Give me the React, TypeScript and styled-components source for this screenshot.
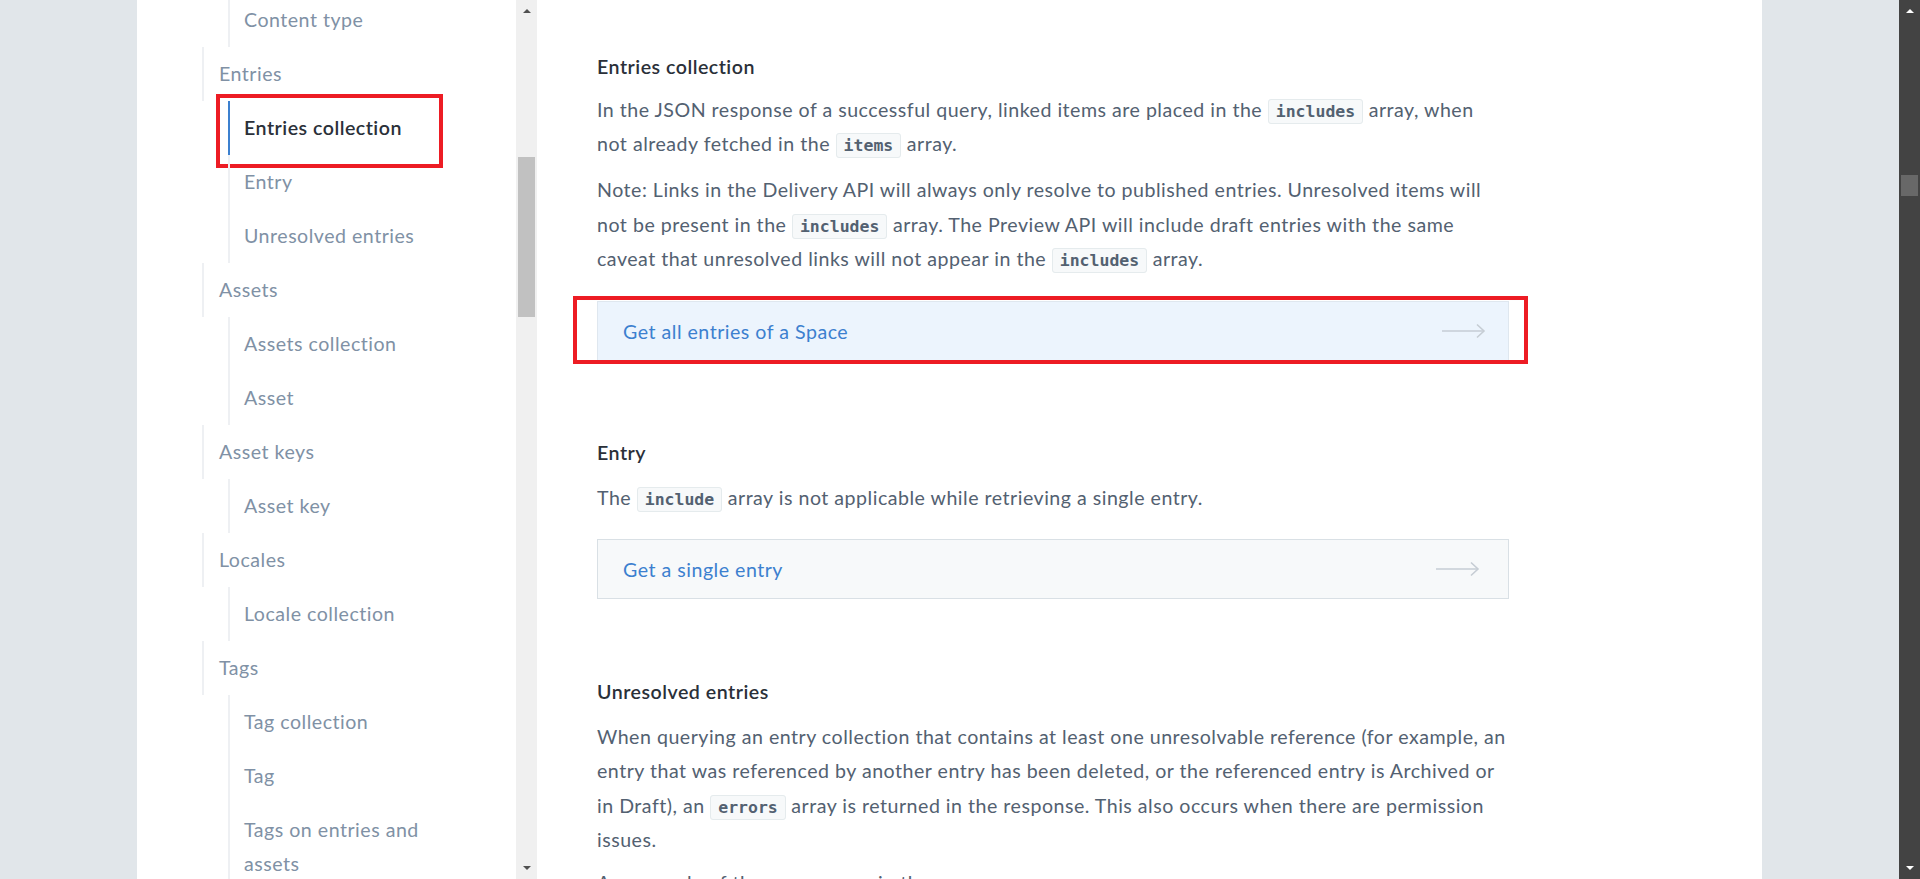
import React from "react";
import styled, { createGlobalStyle } from "styled-components";

const GlobalStyle = createGlobalStyle`
  html, body { margin: 0; padding: 0; height: 100%; overflow: hidden; }
  body { font-family: Lato, "Open Sans", sans-serif; -webkit-font-smoothing: antialiased; letter-spacing: 0.5px; }
  #root { height: 100%; }
`;

const Shell = styled.div`
  display: flex;
  width: 1920px;
  height: 879px;
  overflow: hidden;
  background: #e1e6ea;
`;

const Gutter = styled.div`
  width: 137px;
  flex: none;
  background: #e1e6ea;
`;

const Page = styled.div`
  display: flex;
  width: 1625px;
  flex: none;
  height: 100%;
  background: #ffffff;
`;

const Sidebar = styled.nav`
  width: 379px;
  flex: none;
  box-sizing: border-box;
  padding: 0 50px 0 65px;
  overflow: hidden;
`;

const NavTree = styled.div`
  margin-top: -7px;
`;

const GroupLabel = styled.div`
  border-left: 2px solid #eef0f3;
  padding: 10px 0 10px 15px;
  font-size: 19.6px;
  line-height: 34px;
  color: #8091a5;
`;

const SubList = styled.div`
  margin-left: 26px;
`;

const SubItem = styled.div<{ $active?: boolean }>`
  position: relative;
  border-left: 2px solid ${(p) => (p.$active ? "#3c80cf" : "#eef0f3")};
  padding: 10px 0 10px 14px;
  font-size: 19.6px;
  line-height: 34px;
  color: ${(p) => (p.$active ? "#2a3039" : "#8091a5")};
  font-weight: ${(p) => (p.$active ? 600 : 400)};
`;

const Highlight = styled.span<{ $l: number; $t: number; $r: number; $b: number }>`
  position: absolute;
  left: ${(p) => p.$l}px;
  top: ${(p) => p.$t}px;
  right: ${(p) => p.$r}px;
  bottom: ${(p) => p.$b}px;
  border: 4.5px solid #ed1c24;
  pointer-events: none;
`;

const ScrollTrack = styled.div<{ $dark?: boolean }>`
  width: 21px;
  flex: none;
  height: 100%;
  display: flex;
  flex-direction: column;
  align-items: center;
  background: ${(p) => (p.$dark ? "#434343" : "#f0f0f0")};
`;

const ScrollArrow = styled.div<{ $dark?: boolean; $down?: boolean }>`
  width: 0;
  height: 0;
  margin: ${(p) => (p.$down ? "0 0 9px" : "9px 0 0")};
  border-left: 4.5px solid transparent;
  border-right: 4.5px solid transparent;
  ${(p) =>
    p.$down
      ? `border-top: 4.5px solid ${p.$dark ? "#ffffff" : "#505050"};`
      : `border-bottom: 4.5px solid ${p.$dark ? "#ffffff" : "#505050"};`}
`;

const ScrollThumb = styled.div<{ $dark?: boolean; $top: number; $h: number }>`
  width: 17px;
  height: ${(p) => p.$h}px;
  margin-top: ${(p) => p.$top}px;
  background: ${(p) => (p.$dark ? "#686868" : "#c1c1c1")};
`;

const ScrollSpacer = styled.div`
  flex: 1;
`;

const Content = styled.main`
  flex: 1;
  padding: 50px 0 0 60px;
  overflow: hidden;
`;

const Column = styled.div`
  width: 912px;
`;

const Heading = styled.h3<{ $gap?: number }>`
  margin: ${(p) => p.$gap ?? 0}px 0 0;
  font-size: 19.6px;
  line-height: 34px;
  font-weight: 600;
  color: #2a3039;
`;

const Para = styled.p<{ $gap: number }>`
  margin: ${(p) => p.$gap}px 0 0;
  font-size: 19.6px;
  line-height: 34.2px;
  color: #536171;
`;

const Code = styled.code`
  font-family: "DejaVu Sans Mono", "Liberation Mono", monospace;
  font-weight: 700;
  font-size: 16.5px;
  line-height: 1;
  letter-spacing: 0;
  color: #536171;
  background: #f7f9fa;
  border: 1px solid #e5ebed;
  border-radius: 3px;
  padding: 2px 7px;
`;

const LinkBox = styled.a<{ $hover?: boolean; $gap: number }>`
  position: relative;
  box-sizing: border-box;
  display: flex;
  align-items: center;
  justify-content: space-between;
  height: 60px;
  margin-top: ${(p) => p.$gap}px;
  padding: 0 ${(p) => (p.$hover ? 22 : 28)}px 0 25px;
  background: ${(p) => (p.$hover ? "#ecf4fd" : "#f7f9fa")};
  border: 1px solid ${(p) => (p.$hover ? "#dfe7ef" : "#d9e0e5")};
  font-size: 19.6px;
  color: #3c80cf;
  text-decoration: none;
`;

const Arrow = () => (
  <svg width="44" height="16" viewBox="0 0 44 16" fill="none">
    <path d="M0 8 H42" stroke="#c6cdd4" strokeWidth="1.6" />
    <path d="M35 1.5 L42 8 L35 14.5" stroke="#c6cdd4" strokeWidth="1.6" />
  </svg>
);

export default function App() {
  return (
    <>
      <GlobalStyle />
      <Shell>
        <Gutter />
        <Page>
          <Sidebar>
            <NavTree>
              <SubList>
                <SubItem>Content type</SubItem>
              </SubList>
              <GroupLabel>Entries</GroupLabel>
              <SubList>
                <SubItem $active>
                  Entries collection
                  <Highlight $l={-14} $t={-7} $r={23} $b={-13} />
                </SubItem>
                <SubItem>Entry</SubItem>
                <SubItem>Unresolved entries</SubItem>
              </SubList>
              <GroupLabel>Assets</GroupLabel>
              <SubList>
                <SubItem>Assets collection</SubItem>
                <SubItem>Asset</SubItem>
              </SubList>
              <GroupLabel>Asset keys</GroupLabel>
              <SubList>
                <SubItem>Asset key</SubItem>
              </SubList>
              <GroupLabel>Locales</GroupLabel>
              <SubList>
                <SubItem>Locale collection</SubItem>
              </SubList>
              <GroupLabel>Tags</GroupLabel>
              <SubList>
                <SubItem>Tag collection</SubItem>
                <SubItem>Tag</SubItem>
                <SubItem>Tags on entries and assets</SubItem>
              </SubList>
            </NavTree>
          </Sidebar>
          <ScrollTrack>
            <ScrollArrow />
            <ScrollThumb $top={144} $h={160} />
            <ScrollSpacer />
            <ScrollArrow $down />
          </ScrollTrack>
          <Content>
            <Column>
              <Heading>Entries collection</Heading>
              <Para $gap={9}>
                In the JSON response of a successful query, linked items are placed in the{" "}
                <Code>includes</Code> array, when not already fetched in the <Code>items</Code> array.
              </Para>
              <Para $gap={12}>
                Note: Links in the Delivery API will always only resolve to published entries.
                Unresolved items will not be present in the <Code>includes</Code> array. The
                Preview API will include draft entries with the same caveat that unresolved links
                will not appear in the <Code>includes</Code> array.
              </Para>
              <LinkBox $hover $gap={25}>
                Get all entries of a Space
                <Arrow />
                <Highlight $l={-25} $t={-6} $r={-20} $b={-4} />
              </LinkBox>
              <Heading $gap={75}>Entry</Heading>
              <Para $gap={11}>
                The <Code>include</Code> array is not applicable while retrieving a single entry.
              </Para>
              <LinkBox $gap={24}>
                Get a single entry
                <Arrow />
              </LinkBox>
              <Heading $gap={76}>Unresolved entries</Heading>
              <Para $gap={11}>
                When querying an entry collection that contains at least one unresolvable reference
                (for example, an entry that was referenced by another entry has been deleted, or the
                referenced entry is Archived or in Draft), an <Code>errors</Code> array is returned
                in the response. This also occurs when there are permission issues.
              </Para>
              <Para $gap={9}>An example of the errors array in the response:</Para>
            </Column>
          </Content>
        </Page>
        <Gutter />
        <ScrollTrack $dark>
          <ScrollArrow $dark />
          <ScrollThumb $dark $top={162} $h={21} />
          <ScrollSpacer />
          <ScrollArrow $dark $down />
        </ScrollTrack>
      </Shell>
    </>
  );
}
